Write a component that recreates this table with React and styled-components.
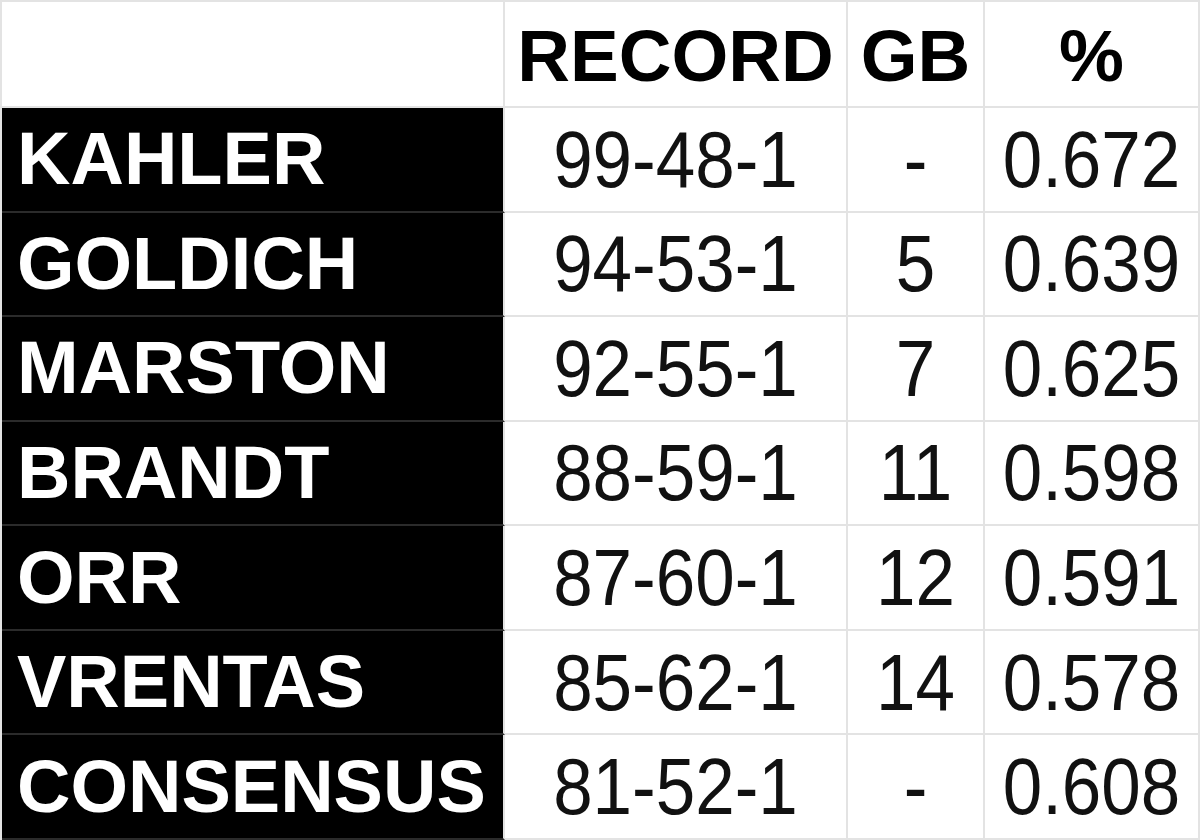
import React from 'react'
import styled, { createGlobalStyle } from 'styled-components'

const GlobalStyle = createGlobalStyle`
  html, body {
    margin: 0;
    padding: 0;
    background: #ffffff;
  }
  body {
    font-family: 'Liberation Sans', Arial, sans-serif;
  }
`

// Spreadsheet-style standings grid
const Sheet = styled.div`
  display: grid;
  grid-template-columns: 503px 343px 137px 215px;
  grid-template-rows: 106px repeat(7, 1fr);
  width: 1200px;
  height: 840px;
  box-sizing: border-box;
  border-top: 2px solid #e3e3e3;
  border-left: 2px solid #e3e3e3;
  overflow: hidden;
`

const Cell = styled.div`
  display: flex;
  align-items: center;
  justify-content: ${(p) => (p.$left ? 'flex-start' : 'center')};
  box-sizing: border-box;
  border-right: 2px solid #e3e3e3;
  border-bottom: 2px solid #e3e3e3;
  background: #ffffff;
  color: #111111;
  font-size: 71px;
  line-height: 1;
  white-space: nowrap;
  overflow: hidden;
`

// numbers in the source are a touch taller than plain Arial
const Num = styled.span`
  display: inline-block;
  transform: scaleY(1.12);
  transform-origin: center;
`

const HeadCell = styled(Cell)`
  font-weight: bold;
  font-size: 73px;
  color: #000000;
  padding-top: 2px;
`

const NameCell = styled(Cell)`
  background: #000000;
  color: #ffffff;
  font-weight: bold;
  font-size: 74px;
  padding-left: 15px;
  border-bottom-color: #2b2b2b;
  border-right-color: #e3e3e3;
`

const rows = [
  { name: 'KAHLER', record: '99-48-1', gb: '-', pct: '0.672' },
  { name: 'GOLDICH', record: '94-53-1', gb: '5', pct: '0.639' },
  { name: 'MARSTON', record: '92-55-1', gb: '7', pct: '0.625' },
  { name: 'BRANDT', record: '88-59-1', gb: '11', pct: '0.598' },
  { name: 'ORR', record: '87-60-1', gb: '12', pct: '0.591' },
  { name: 'VRENTAS', record: '85-62-1', gb: '14', pct: '0.578' },
  { name: 'CONSENSUS', record: '81-52-1', gb: '-', pct: '0.608' }
]

export default function App() {
  return (
    <>
      <GlobalStyle />
      <Sheet>
        <HeadCell />
        <HeadCell>RECORD</HeadCell>
        <HeadCell>GB</HeadCell>
        <HeadCell>%</HeadCell>
        {rows.map((r) => (
          <React.Fragment key={r.name}>
            <NameCell $left>{r.name}</NameCell>
            <Cell><Num>{r.record}</Num></Cell>
            <Cell><Num>{r.gb}</Num></Cell>
            <Cell><Num>{r.pct}</Num></Cell>
          </React.Fragment>
        ))}
      </Sheet>
    </>
  )
}
